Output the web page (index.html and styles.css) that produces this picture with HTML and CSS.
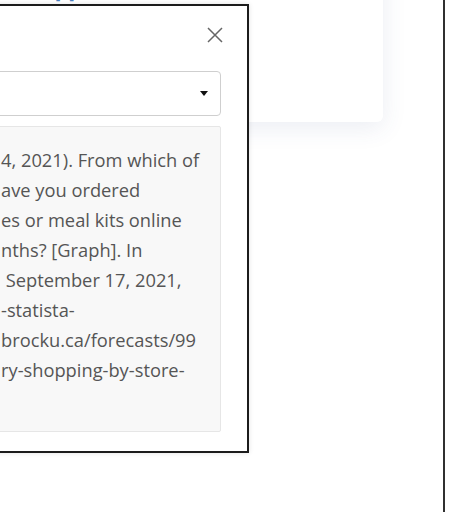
FILE: index.html
```html
<!DOCTYPE html>
<html lang="en">
<head>
<meta charset="utf-8">
<title>Cite</title>
<link rel="stylesheet" href="styles.css">
</head>
<body>
<div class="viewport">
  <div class="main">
    <div class="card">
      <p class="card-ref"><a class="ref-link" href="#">[1]</a></p>
    </div>
    <div class="modal" role="dialog">
      <div class="modal-head">
        <button class="close" aria-label="Close">
          <svg width="16" height="16" viewBox="0 0 16 16" aria-hidden="true"><path d="M1 1L15 15M15 1L1 15" stroke="#666" stroke-width="1.5" fill="none"/></svg>
        </button>
      </div>
      <div class="select"><span class="caret"></span></div>
      <div class="citation">
        <div class="line">4, 2021). From which of</div>
        <div class="line">ave you ordered</div>
        <div class="line">es or meal kits online</div>
        <div class="line">nths? [Graph]. In</div>
        <div class="line">&nbsp;September 17, 2021,</div>
        <div class="line">-statista-</div>
        <div class="line">brocku.ca/forecasts/99</div>
        <div class="line">ry-shopping-by-store-</div>
      </div>
    </div>
  </div>
</div>
</body>
</html>
```
FILE: styles.css
```css
html, body {
  margin: 0;
  background: #fff;
  font-family: "Open Sans", "Noto Sans", sans-serif;
}

.viewport {
  width: 476px;
  height: 512px;
  overflow: hidden;
  position: relative;
}

.main {
  position: relative;
  display: flow-root;
  width: 445px;
  height: 512px;
  box-sizing: border-box;
  border-right: 2px solid #303030;
}

.card {
  margin: -100px 0 0 -100px;
  width: 483px;
  height: 222px;
  box-sizing: border-box;
  background: #fff;
  border-radius: 6px;
  box-shadow: 0 6px 24px rgba(60, 80, 140, 0.1);
  padding: 82.5px 0 0 155px;
}

.card-ref {
  margin: 0;
  font-size: 16px;
  line-height: 20px;
}

.ref-link {
  color: #4a7fc0;
  text-decoration: none;
}

.modal {
  position: absolute;
  left: -200px;
  top: 4px;
  width: 449px;
  height: 449px;
  box-sizing: border-box;
  border: 2px solid #1c1c1c;
  background: #fff;
  box-shadow: 0 0 5px rgba(0, 0, 0, 0.12);
  padding: 21px 26px 0 0;
  display: flex;
  flex-direction: column;
}

.modal-head {
  display: flex;
  justify-content: flex-end;
  height: 16px;
  margin-right: -2px;
  margin-bottom: 28px;
}

.close {
  width: 16px;
  height: 16px;
  padding: 0;
  border: 0;
  background: none;
  display: block;
}

.close svg {
  display: block;
}

.select {
  height: 45px;
  box-sizing: border-box;
  border: 1px solid #cfcfcf;
  border-radius: 4px;
  background: #fff;
  display: flex;
  justify-content: flex-end;
  align-items: center;
  padding-right: 12px;
}

.caret {
  width: 0;
  height: 0;
  border-left: 4px solid transparent;
  border-right: 4px solid transparent;
  border-top: 5px solid #111;
}

.citation {
  margin-top: 10px;
  height: 306px;
  box-sizing: border-box;
  background: #f8f8f8;
  border: 1px solid #e6e6e6;
  border-radius: 2px;
  padding: 18px 0 0 198px;
  color: #555;
  font-size: 18.3px;
  line-height: 30px;
}

.line {
  white-space: nowrap;
}
```
